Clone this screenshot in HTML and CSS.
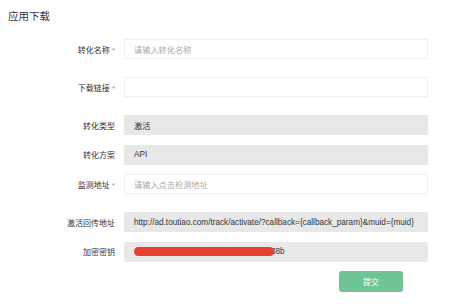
FILE: index.html
```html
<!DOCTYPE html>
<html lang="zh-CN">
<head>
    <meta charset="UTF-8">
    <title>应用下载</title>
    <link rel="stylesheet" href="styles.css">
</head>
<body>
    <h2 class="page-title">应用下载</h2>

    <div class="form">
        <div class="form-row required">
            <label class="form-label">转化名称 <span class="star">*</span></label>
            <div class="field"><span class="placeholder">请输入转化名称</span></div>
        </div>

        <div class="form-row required">
            <label class="form-label">下载链接 <span class="star">*</span></label>
            <div class="field"></div>
        </div>

        <div class="form-row">
            <label class="form-label">转化类型</label>
            <div class="field disabled">激活</div>
        </div>

        <div class="form-row">
            <label class="form-label">转化方案</label>
            <div class="field disabled">API</div>
        </div>

        <div class="form-row required">
            <label class="form-label">监测地址 <span class="star">*</span></label>
            <div class="field"><span class="placeholder">请输入点击检测地址</span></div>
        </div>

        <div class="form-row">
            <label class="form-label">激活回传地址</label>
            <div class="field disabled">http://ad.toutiao.com/track/activate/?callback={callback_param}&amp;muid={muid}</div>
        </div>

        <div class="form-row">
            <label class="form-label">加密密钥</label>
            <div class="field disabled"><span class="redact"></span>38b</div>
        </div>

        <div class="form-actions">
            <button class="submit-btn">提交</button>
        </div>
    </div>
</body>
</html>
```

FILE: styles.css
```css
/* General */
body {
    margin: 0;
    padding: 0 8px;
    background: #fff;
    color: #333;
    font-family: "Liberation Sans", "Noto Sans CJK SC", sans-serif;
}

/* Title */
.page-title {
    margin: 0;
    padding-top: 9px;
    font-size: 10.5px;
    font-weight: normal;
    line-height: 15px;
    color: #333;
}

/* Form */
.form {
    margin-top: 15px;
}

.form-row {
    display: flex;
    align-items: center;
    margin-bottom: 9.5px;
}

.form-row.required {
    margin-bottom: 18px;
}

.form-label {
    width: 107px;
    text-align: right;
    font-size: 8px;
    color: #333;
}

.star {
    color: #e8777a;
}

.field {
    position: relative;
    margin-left: 9px;
    width: 304px;
    height: 20px;
    box-sizing: border-box;
    padding: 0 9px;
    border: 1px solid #f0f0f0;
    border-radius: 1px;
    display: flex;
    align-items: center;
    font-size: 8.2px;
    color: #333;
    white-space: nowrap;
}

.field.disabled {
    background: #e8e8e8;
    border-color: #e8e8e8;
}

.placeholder {
    color: #aaa;
}

/* Redacted key */
.redact {
    position: relative;
    z-index: 1;
    display: inline-block;
    width: 140px;
    height: 9px;
    margin-right: -3px;
    border-radius: 5px;
    background: #e8412f;
}

/* Submit */
.form-actions {
    padding-left: 331px;
}

.submit-btn {
    width: 64px;
    height: 21px;
    border: none;
    border-radius: 3px;
    background: #6fc497;
    color: #fff;
    font-family: "Noto Sans CJK SC", sans-serif;
    font-size: 8px;
    cursor: pointer;
}
```
